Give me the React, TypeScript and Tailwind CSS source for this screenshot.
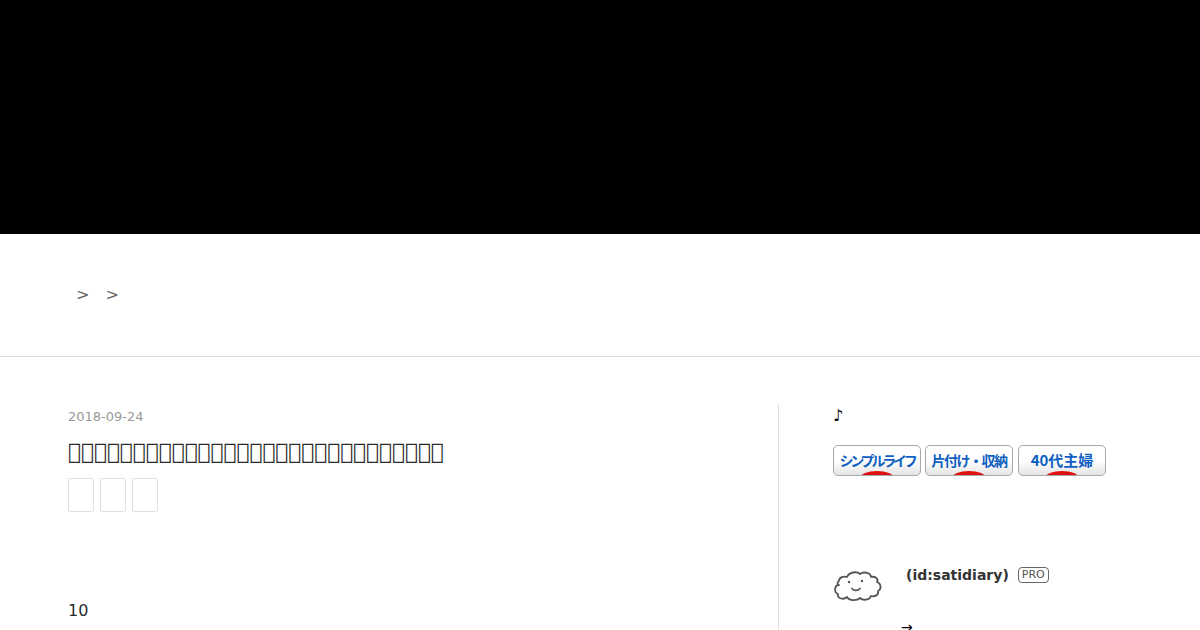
const tofu = "\uE000".repeat(29);

function BlogButton({ label, className }: { label: string; className: string }) {
  return (
    <div className="w-[88px] h-[31px] relative overflow-hidden rounded-[5px] border border-[#a8a8a8] bg-gradient-to-b from-white via-white to-[#e4e4e4] flex justify-center">
      <span className={`mt-[4px] leading-[20px] font-bold text-[#0f5fc2] font-['Noto_Sans_CJK_JP',sans-serif] whitespace-nowrap ${className}`}>{label}</span>
      <span className="absolute left-1/2 -translate-x-1/2 top-[25px] w-[34px] h-[14px] rounded-[50%] bg-[#e01010]" />
    </div>
  );
}

function CloudFace() {
  return (
    <svg width="50" height="32" viewBox="0 0 50 32" fill="none" stroke="#555555" strokeWidth="1.8" strokeLinecap="round" strokeLinejoin="round">
      <path d="M6 11C6 7 11 6 14 7C16 2 24 1 27 4C31 1 38 3 38 7C42 6 46 9 44 12C48 13 49 19 45 21C46 25 42 27 38 26C37 30 30 31 27 28C24 31 16 31 14 27C11 30 4 29 5 24C1 23 1 15 6 15C4 14 4 12 6 11Z" />
      <circle cx="16" cy="12" r="1.2" fill="#555555" stroke="none" />
      <circle cx="29" cy="11" r="1.2" fill="#555555" stroke="none" />
      <path d="M19 18.5C20 21 25 21 27 18.5" />
    </svg>
  );
}

export default function App() {
  return (
    <div className="h-[630px] overflow-hidden bg-white font-['DejaVu_Sans',sans-serif] text-[#2b2b2b]">
      <div className="h-[234px] bg-black" />

      <div className="h-[123px] border-b border-[#dddddd] pl-[76px] pt-[51px] text-[#666666] text-[16px] leading-[20px] flex gap-[16px]">
        <span>&gt;</span>
        <span>&gt;</span>
      </div>

      <div className="flex pt-[47px]">
        <div className="w-[779px] pl-[68px] border-r border-[#dddddd] h-[300px]">
          <div className="mt-[3px] text-[13px] leading-[20px] text-[#999999]">2018-09-24</div>
          <h1 className="mt-[10px] text-[21.6px] leading-[30px] font-normal text-[#2b2b2b] font-['DejaVu_Sans'] whitespace-nowrap">{tofu}</h1>
          <div className="mt-[11px] flex gap-[6px]">
            <div className="w-[26px] h-[34px] border border-[#e0e0e0] rounded-[2px]" />
            <div className="w-[26px] h-[34px] border border-[#e0e0e0] rounded-[2px]" />
            <div className="w-[26px] h-[34px] border border-[#e0e0e0] rounded-[2px]" />
          </div>
          <p className="mt-[89px] text-[16px] leading-[20px]">10</p>
        </div>

        <div className="pl-[54px]">
          <div className="mt-[2px] text-[16px] leading-[20px] text-black">♪</div>
          <div className="mt-[19px] flex gap-[4px]">
            <BlogButton label="シンプルライフ" className="text-[14px] tracking-[-3.2px]" />
            <BlogButton label="片付け・収納" className="text-[14px] tracking-[-1.5px]" />
            <div className="ml-px">
              <BlogButton label="40代主婦" className="text-[15px]" />
            </div>
          </div>
          <div className="mt-[91px] flex">
            <div className="mt-[3px] w-[73px] shrink-0"><CloudFace /></div>
            <div>
              <div className="flex items-center gap-[9px] h-[16px]">
                <span className="text-[14px] font-bold text-[#333333]">(id:satidiary)</span>
                <span className="border border-[#666666] rounded-[4px] px-[3px] text-[11px] leading-[14px] text-[#555555]">PRO</span>
              </div>
              <div className="mt-[36px] -ml-[5px] text-[14px] leading-[16px] text-black">→</div>
            </div>
          </div>
        </div>
      </div>
    </div>
  );
}
